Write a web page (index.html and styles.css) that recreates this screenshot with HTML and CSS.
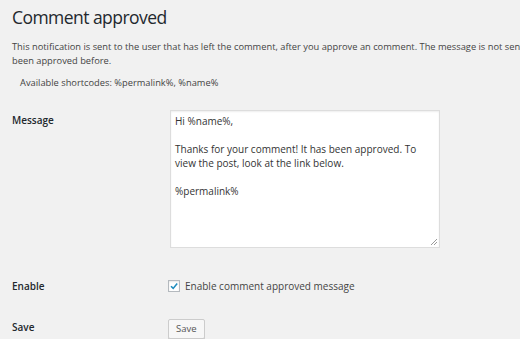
FILE: index.html
```html
<!DOCTYPE html>
<html>
<head>
<meta charset="utf-8">
<link rel="stylesheet" href="styles.css">
</head>
<body>
<div class="wrap">
  <h2 class="title">Comment approved</h2>
  <p class="desc">This notification is sent to the user that has left the comment, after you approve an comment. The message is not sent if the comment has been approved before.</p>
  <p class="codes">Available shortcodes: %permalink%, %name%</p>
  <div class="form">
    <div class="row row-msg">
      <div class="label">Message</div>
      <div class="field">
        <div class="textarea">
          <div class="ta-line">Hi %name%,</div>
          <div class="ta-line">&nbsp;</div>
          <div class="ta-line">Thanks for your comment! It has been approved. To view the post, look at the link below.</div>
          <div class="ta-line">&nbsp;</div>
          <div class="ta-line">%permalink%</div>
          <svg class="grip" width="10" height="10" viewBox="0 0 10 10"><path d="M9 3 L3 9 M9 6 L6 9" stroke="#9a9a9a" stroke-width="1" fill="none"/></svg>
        </div>
      </div>
    </div>
    <div class="row row-enable">
      <div class="label">Enable</div>
      <div class="field check">
        <span class="box"><svg width="10" height="10" viewBox="0 0 10 10"><path d="M2 5.2 L4.2 7.4 L8.2 2.6" stroke="#1e8cbe" stroke-width="1.6" fill="none"/></svg></span>
        <span class="check-label">Enable comment approved message</span>
      </div>
    </div>
    <div class="row row-save">
      <div class="label">Save</div>
      <div class="field"><span class="btn">Save</span></div>
    </div>
  </div>
</div>
</body>
</html>
```

FILE: styles.css
```css
html, body {
  margin: 0;
  padding: 0;
  background: #f1f1f1;
}
body {
  font-family: "Open Sans", "Liberation Sans", sans-serif;
  color: #444;
  width: 520px;
  height: 339px;
  overflow: hidden;
}
.wrap {
  padding: 0 0 0 12px;
  width: 508px;
  height: 339px;
  overflow: hidden;
}
.title {
  margin: 0;
  padding-top: 4px;
  font-size: 17.5px;
  letter-spacing: -0.55px;
  font-weight: 400;
  line-height: 26px;
  color: #23282d;
}
.desc {
  margin: 10px 0 0;
  font-size: 9.3px;
  line-height: 14px;
  width: 600px;
}
.codes {
  margin: 8px 0 0 8px;
  font-size: 9.3px;
  line-height: 14px;
}
.form {
  margin-top: 20px;
}
.row {
  display: flex;
}
.label {
  width: 158px;
  flex: none;
  font-size: 10px;
  font-weight: 600;
  color: #23282d;
}
.row-msg .label {
  padding-top: 3px;
}
.row-msg {
  margin-top: 1px;
}
.textarea {
  position: relative;
  box-sizing: border-box;
  width: 270px;
  height: 138px;
  background: #fff;
  border: 1px solid #ddd;
  box-shadow: inset 0 1px 2px rgba(0,0,0,0.07);
  padding: 3px 14px 0 4px;
  font-size: 10px;
  line-height: 14px;
  color: #333;
}
.grip {
  position: absolute;
  right: 1px;
  bottom: 1px;
}
.row-enable {
  margin-top: 31px;
  align-items: center;
}
.check {
  display: flex;
  align-items: center;
  margin-left: -2px;
}
.box {
  box-sizing: border-box;
  width: 12px;
  height: 12px;
  border: 1px solid #b4b9be;
  background: #fff;
  box-shadow: inset 0 1px 2px rgba(0,0,0,0.1);
  display: flex;
  align-items: center;
  justify-content: center;
  margin-right: 5px;
}
.check-label {
  font-size: 10px;
}
.row-save {
  margin-top: 22px;
  align-items: center;
}
.btn {
  display: inline-block;
  box-sizing: border-box;
  margin-left: -2px;
  height: 20px;
  line-height: 18px;
  padding: 0 7px;
  font-size: 9.5px;
  color: #555;
  background: #f7f7f7;
  border: 1px solid #ccc;
  border-radius: 2px;
  box-shadow: 0 1px 0 #ccc;
}
```
